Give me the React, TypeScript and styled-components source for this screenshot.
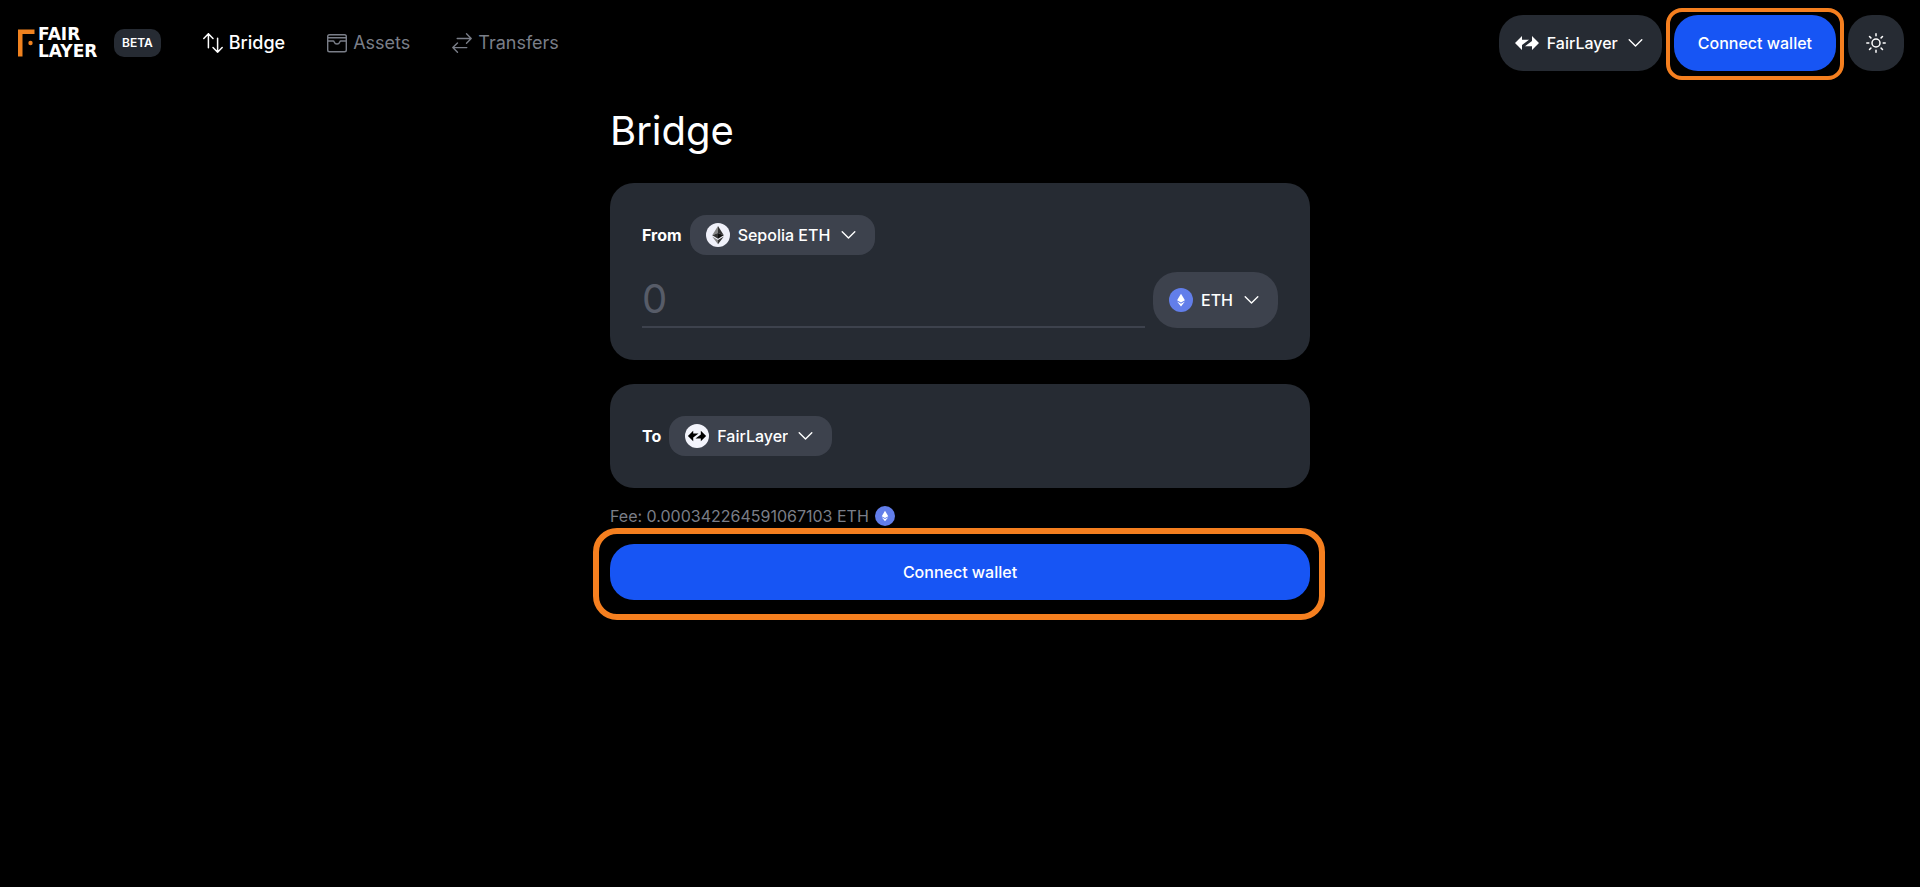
import React, { useState } from "react";
import styled, { createGlobalStyle } from "styled-components";

const color = {
  page: "#000000",
  card: "#262b33",
  chip: "#3d424d",
  text: "#ffffff",
  muted: "#7a7e88",
  placeholder: "#575c68",
  primary: "#1755f4",
  accent: "#f57f1f",
};

const GlobalStyle = createGlobalStyle`
  *, *::before, *::after { box-sizing: border-box; }
  body {
    margin: 0;
    min-height: 100vh;
    background: ${color.page};
    color: ${color.text};
    font-family: Inter, "Liberation Sans", sans-serif;
    font-size: 16px;
    line-height: 24px;
  }
  button, input, select { font: inherit; color: inherit; }
`;

const Header = styled.header`
  display: flex;
  align-items: center;
  justify-content: space-between;
  padding: 15px 16px;
`;

const HeaderGroup = styled.div`
  display: flex;
  align-items: center;
  gap: 12px;
`;

const HomeLink = styled.a`
  display: flex;
  align-items: center;
  gap: 2px;
  color: ${color.text};
  text-decoration: none;
`;

const Wordmark = styled.span`
  display: flex;
  flex-direction: column;
  min-width: 66px;
  font-family: "DejaVu Sans", sans-serif;
  font-weight: 700;
  font-size: 17px;
  line-height: 17px;
`;

const Badge = styled.span`
  margin-left: 8px;
  padding: 4px 8px;
  border-radius: 10px;
  background: ${color.card};
  font-size: 12px;
  font-weight: 600;
  line-height: 20px;
`;

const Nav = styled.nav`
  display: flex;
  gap: 40px;
  margin-left: 28px;
`;

const NavLink = styled.a<{ $active?: boolean }>`
  display: flex;
  align-items: center;
  gap: 4px;
  color: ${(p) => (p.$active ? color.text : color.muted)};
  font-size: 18px;
  font-weight: ${(p) => (p.$active ? 500 : 400)};
  text-decoration: none;
`;

const Pill = styled.label<{ $tone: "card" | "chip"; $tall?: boolean }>`
  display: flex;
  flex-shrink: 0;
  align-items: center;
  gap: 8px;
  height: ${(p) => (p.$tall ? 56 : 40)}px;
  padding: 0 16px;
  border-radius: ${(p) => (p.$tall ? 24 : 16)}px;
  background: ${(p) => color[p.$tone]};
  cursor: pointer;
`;

const PillSelect = styled.select`
  appearance: none;
  padding: 0;
  border: 0;
  outline: 0;
  background: transparent;
  font-weight: 500;
  cursor: pointer;
`;

const PrimaryButton = styled.button<{ $block?: boolean }>`
  width: ${(p) => (p.$block ? "100%" : "auto")};
  height: 56px;
  padding: 0 24px;
  border: 0;
  border-radius: 24px;
  background: ${color.primary};
  font-weight: 500;
  cursor: pointer;
`;

const Highlight = styled.div<{ $large?: boolean }>`
  position: relative;

  &::after {
    content: "";
    position: absolute;
    inset: ${(p) => (p.$large ? "-16px -15px -20px -17px" : "-7px -8px -9px -8px")};
    border: ${(p) => (p.$large ? 6 : 4)}px solid ${color.accent};
    border-radius: ${(p) => (p.$large ? 24 : 16)}px;
    pointer-events: none;
  }
`;

const ThemeButton = styled.button`
  display: grid;
  place-items: center;
  width: 56px;
  height: 56px;
  padding: 0;
  border: 0;
  border-radius: 24px;
  background: ${color.card};
  cursor: pointer;
`;

const Main = styled.main`
  width: 100%;
  max-width: 732px;
  margin: 0 auto;
  padding: 20px 16px 40px;
`;

const Title = styled.h1`
  margin: 0 0 28px;
  font-size: 40px;
  font-weight: 400;
  line-height: 49px;
`;

const Card = styled.section`
  display: flex;
  flex-direction: column;
  gap: 16px;
  margin-bottom: 24px;
  padding: 32px;
  border-radius: 24px;
  background: ${color.card};

  &:last-of-type { margin-bottom: 16px; }
`;

const Row = styled.div`
  display: flex;
  align-items: center;
  gap: 8px;
`;

const Direction = styled.span`
  font-weight: 700;
`;

const AmountInput = styled.input`
  flex: 1;
  min-width: 0;
  height: 57px;
  padding: 0;
  border: 0;
  border-bottom: 2px solid ${color.chip};
  outline: 0;
  background: transparent;
  font-size: 40px;

  &::placeholder { color: ${color.placeholder}; opacity: 1; }
`;

const Fee = styled.p`
  display: flex;
  align-items: center;
  gap: 6px;
  margin: 0 0 16px;
  color: ${color.muted};
`;

const Logo = () => (
  <svg width="20" height="30" viewBox="0 0 20 30" aria-hidden="true">
    <path d="M2 1.5H18.5V6H6.5V28.5H2Z" fill="#f0821f" />
    <circle cx="14.5" cy="15" r="2.2" fill="#f0821f" />
  </svg>
);

const line = { fill: "none", stroke: "currentColor", strokeLinecap: "round", strokeLinejoin: "round" } as const;

const BridgeIcon = () => (
  <svg width="24" height="24" viewBox="0 0 24 24" {...line} strokeWidth="1.5" aria-hidden="true">
    <path d="M2.8 7.5 7.4 2.8 12 7.5M7.4 2.8V16.8M12 16.5 16.6 21.2 21.2 16.5M16.6 21.2V7.2" />
  </svg>
);

const AssetsIcon = () => (
  <svg width="24" height="24" viewBox="0 0 24 24" {...line} strokeWidth="1.4" aria-hidden="true">
    <rect x="2.7" y="3.7" width="18.6" height="17" rx="1.8" />
    <path d="M2.7 6.8H21.3M2.7 10H8.2C8.8 10 9 10.4 9.2 10.9 9.7 12.3 10.7 13 12 13S14.3 12.3 14.8 10.9C15 10.4 15.2 10 15.8 10H21.3" />
  </svg>
);

const TransfersIcon = () => (
  <svg width="24" height="24" viewBox="0 0 24 24" {...line} strokeWidth="1.4" aria-hidden="true">
    <path d="M16.5 2.8 21.2 7.5 16.5 12.2M21.2 7.5H7.2M7.5 12 2.8 16.6 7.5 21.2M2.8 16.6H16.8" />
  </svg>
);

const Chevron = () => (
  <svg width="20" height="20" viewBox="0 0 20 20" {...line} strokeWidth="1.4" aria-hidden="true">
    <path d="M3.2 6.7 9.5 13 15.8 6.7" />
  </svg>
);

const LayerArrows = "M0 12 7 5V8.8H14L7 13.9V19ZM24 12 17 19V15.2H10L17 10.1V5Z";

const FairLayerIcon = () => (
  <svg width="24" height="24" viewBox="0 0 24 24" aria-hidden="true">
    <path d={LayerArrows} fill="#ffffff" />
  </svg>
);

const FairLayerRoundIcon = () => (
  <svg width="24" height="24" viewBox="0 0 24 24" aria-hidden="true">
    <circle cx="12" cy="12" r="12" fill="#f3f4fc" />
    <path d={LayerArrows} fill="#000000" transform="translate(2.9 2.9) scale(.76)" />
  </svg>
);

const SepoliaIcon = () => (
  <svg width="24" height="24" viewBox="0 0 24 24" aria-hidden="true">
    <circle cx="12" cy="12" r="12" fill="#f0f1fa" />
    <path d="M12 3V9.9L6.2 12.3Z" fill="#868686" />
    <path d="M12 3V9.9L17.8 12.3Z" fill="#343434" />
    <path d="M6.2 12.3 12 9.9V15.7Z" fill="#343434" />
    <path d="M17.8 12.3 12 9.9V15.7Z" fill="#111111" />
    <path d="M6.2 13.6 12 17V21.3Z" fill="#868686" />
    <path d="M17.8 13.6 12 17V21.3Z" fill="#343434" />
  </svg>
);

const EtherIcon = ({ size }: { size: number }) => (
  <svg width={size} height={size} viewBox="0 0 24 24" aria-hidden="true">
    <circle cx="12" cy="12" r="12" fill="#627eea" />
    <path d="M12 5.8 15.9 12.3 12 14.5 8.1 12.3Z" fill="#ffffff" />
    <path d="M8.1 13.5 12 15.7 15.9 13.5 12 18.4Z" fill="#ffffff" />
  </svg>
);

const SunIcon = () => (
  <svg width="24" height="24" viewBox="0 0 24 24" {...line} strokeWidth="1.5" aria-hidden="true">
    <circle cx="12" cy="12" r="4" />
    <path d="M12 2.8V4.8M12 19.2V21.2M2.8 12H4.8M19.2 12H21.2M5.5 5.5 6.9 6.9M17.1 17.1 18.5 18.5M5.5 18.5 6.9 17.1M17.1 6.9 18.5 5.5" />
  </svg>
);

type PickerProps = {
  name: string;
  option: string;
  icon: React.ReactNode;
  tone?: "card" | "chip";
  tall?: boolean;
};

const Picker = ({ name, option, icon, tone = "chip", tall }: PickerProps) => (
  <Pill $tone={tone} $tall={tall}>
    {icon}
    <PillSelect aria-label={name}>
      <option>{option}</option>
    </PillSelect>
    <Chevron />
  </Pill>
);

export default function App() {
  const [amount, setAmount] = useState("");

  return (
    <>
      <GlobalStyle />
      <Header>
        <HeaderGroup>
          <HomeLink href="#home">
            <Logo />
            <Wordmark>
              <span>FAIR</span>
              <span>LAYER</span>
            </Wordmark>
            <Badge>BETA</Badge>
          </HomeLink>
          <Nav>
            <NavLink href="#bridge" $active aria-current="page">
              <BridgeIcon />
              Bridge
            </NavLink>
            <NavLink href="#assets">
              <AssetsIcon />
              Assets
            </NavLink>
            <NavLink href="#transfers">
              <TransfersIcon />
              Transfers
            </NavLink>
          </Nav>
        </HeaderGroup>
        <HeaderGroup>
          <Picker name="Network" option="FairLayer" icon={<FairLayerIcon />} tone="card" tall />
          <Highlight>
            <PrimaryButton type="button">Connect wallet</PrimaryButton>
          </Highlight>
          <ThemeButton type="button" aria-label="Switch theme">
            <SunIcon />
          </ThemeButton>
        </HeaderGroup>
      </Header>
      <Main>
        <Title>Bridge</Title>
        <Card>
          <Row>
            <Direction>From</Direction>
            <Picker name="From network" option="Sepolia ETH" icon={<SepoliaIcon />} />
          </Row>
          <Row>
            <AmountInput
              aria-label="Amount"
              inputMode="decimal"
              placeholder="0"
              value={amount}
              onChange={(e) => setAmount(e.target.value)}
            />
            <Picker name="Token" option="ETH" icon={<EtherIcon size={24} />} tall />
          </Row>
        </Card>
        <Card>
          <Row>
            <Direction>To</Direction>
            <Picker name="To network" option="FairLayer" icon={<FairLayerRoundIcon />} />
          </Row>
        </Card>
        <Fee>
          Fee: 0.000342264591067103 ETH
          <EtherIcon size={20} />
        </Fee>
        <Highlight $large>
          <PrimaryButton type="button" $block>
            Connect wallet
          </PrimaryButton>
        </Highlight>
      </Main>
    </>
  );
}
